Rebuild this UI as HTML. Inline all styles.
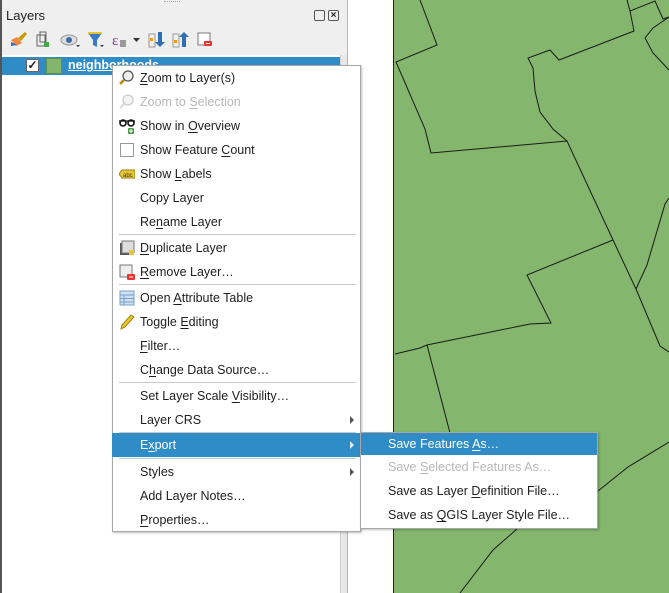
<!DOCTYPE html>
<html><head><meta charset="utf-8"><style>
*{margin:0;padding:0;box-sizing:border-box}
body{width:669px;height:593px;overflow:hidden;position:relative;background:#fff;font-family:"Liberation Sans",sans-serif;font-size:12.5px;color:#1e1e1e}
.abs{position:absolute}
u{text-decoration:underline;text-underline-offset:2px}
.menu{position:absolute;background:#fff;border:1px solid #a8a8a8;box-shadow:1px 1px 2px rgba(0,0,0,.25)}
.it{position:absolute;left:0;right:0;height:24px;line-height:24px;padding-left:27px;white-space:nowrap}
.dis{color:#b8b8b8}
.sep{position:absolute;left:6px;right:4px;height:1px;background:#c8c8c8}
.hl{background:#308cc6;color:#fff}
.arr{position:absolute;right:6px;top:8px;width:0;height:0;border-left:4px solid #555;border-top:4px solid transparent;border-bottom:4px solid transparent}
.ic{position:absolute;left:6px;top:4px;width:16px;height:16px}
</style></head><body>
<div class="abs" style="left:0;top:0;width:348px;height:593px;background:#efefef;border-left:2px solid #555"></div>
<div class="abs" style="left:347px;top:0;width:1px;height:593px;background:#b5b5b5"></div>
<div class="abs" style="left:164px;top:1px;width:16px;height:2px;border-top:1px dotted #aaa"></div>
<div class="abs" style="left:6px;top:8px;font-size:13px">Layers</div>
<div class="abs" style="left:314px;top:10px;width:11px;height:11px;border:1px solid #555;border-radius:2px"></div>
<div class="abs" style="left:328px;top:10px;width:11px;height:11px;border:1px solid #555;border-radius:2px;font-size:10px;line-height:9px;text-align:center;font-weight:bold">×</div>
<svg class="abs" style="left:8px;top:30px" width="210" height="20">
<path d="M3 10 l6 -3 l5 6 l-6 3z" fill="#e84"/><path d="M3 12 l6 3 l-6 1z" fill="#36c"/><path d="M10 8 l7 -6 l2 2 l-6 7z" fill="#c90"/>
<rect x="29" y="5" width="8" height="11" fill="none" stroke="#666"/><rect x="32" y="2" width="6" height="10" fill="none" stroke="#666"/><rect x="36" y="12" width="5" height="5" fill="#4a4"/>
<ellipse cx="61" cy="10" rx="8" ry="5" fill="#ddd" stroke="#999"/><circle cx="61" cy="10" r="3" fill="#3a6ea5"/><path d="M68 15 l4 0 l-2 2z" fill="#333"/>
<path d="M80 3 h14 l-5 7 v7 l-4 -2 v-5z" fill="#3a7cc4"/><rect x="80" y="2" width="14" height="2" fill="#e8c030"/><path d="M92 15 l4 0 l-2 2z" fill="#333"/>
<text x="104" y="15" font-size="15" fill="#7a3a8a" font-family="Liberation Serif">ε</text><rect x="112" y="10" width="6" height="7" fill="#999"/><path d="M125 8 h7 l-3.5 4z" fill="#333"/>
<rect x="141" y="4" width="6" height="13" fill="none" stroke="#999"/><rect x="142" y="8" width="3" height="3" fill="#f90"/><path d="M150 2 v10 h-3 l5 5 l5 -5 h-3 v-10z" fill="#2f6db5"/>
<rect x="165" y="4" width="6" height="13" fill="none" stroke="#999"/><rect x="166" y="10" width="3" height="3" fill="#f90"/><path d="M174 17 v-10 h-3 l5 -5 l5 5 h-3 v10z" fill="#2f6db5"/>
<rect x="190" y="3" width="12" height="12" fill="#fff" stroke="#777"/><rect x="196" y="11" width="8" height="5" rx="1" fill="#e33"/><rect x="198" y="13" width="4" height="1" fill="#fff"/>
</svg>
<div class="abs" style="left:2px;top:55px;width:338px;height:538px;background:#fff"></div>
<div class="abs" style="left:340px;top:55px;width:7px;height:538px;background:#e8e8e8;border-left:1px solid #d0d0d0"></div>
<div class="abs" style="left:2px;top:57px;width:338px;height:18px;background:#308cc6"></div>
<div class="abs" style="left:26px;top:59px;width:13px;height:13px;background:#fff;border:1px solid #666;font-size:12px;line-height:11px;text-align:center;font-weight:bold">✓</div>
<div class="abs" style="left:46px;top:58px;width:16px;height:16px;background:#83b56d;border:1px solid #5f8f4f"></div>
<div class="abs" style="left:68px;top:58px;color:#fff;font-weight:bold;text-decoration:underline">neighborhoods</div>
<div class="abs" style="left:393px;top:0;width:276px;height:593px;background:#84b66d;border-left:1px solid #222"></div>
<svg class="abs" style="left:0;top:0" width="669" height="593" fill="none" stroke="#1a1a1a" stroke-width="1">
<polyline points="420,0 437,45 396,62 425,129 431,153 567,141 613,240 636,289 660,346 669,352"/>
<polyline points="567,141 553,129 540,112 535,91 533,68 528,58 550,50 559,60 634,31 630,11 655,1 663,19 669,17"/>
<polyline points="630,11 627,0"/>
<polyline points="645,38 653,28 669,17"/>
<polyline points="645,38 653,53 669,70"/>
<polyline points="613,240 527,275 551,323 530,324 427,345 420,348 395,354"/>
<polyline points="427,345 450,433"/>
<polyline points="636,289 647,265 665,204 669,198"/>
<polyline points="669,442 628,467 598,491"/>
<polyline points="517,529 493,550 460,593"/>
</svg>
<div class="menu" style="left:112px;top:65px;width:249px;height:467px">
<div class="it" style="top:0"><svg class="ic" viewBox="0 0 16 16"><circle cx="9" cy="6" r="5" fill="#eee" stroke="#555" stroke-width="1.3"/><path d="M5 10 l-4 4" stroke="#b8860b" stroke-width="2.5"/></svg><u>Z</u>oom to Layer(s)</div>
<div class="it dis" style="top:24px"><svg class="ic" viewBox="0 0 16 16"><circle cx="9" cy="6" r="5" fill="#f4f4f4" stroke="#ccc" stroke-width="1.3"/><path d="M5 10 l-4 4" stroke="#ddd" stroke-width="2.5"/></svg>Zoom to <u>S</u>election</div>
<div class="it" style="top:48px"><svg class="ic" viewBox="0 0 16 16"><circle cx="4" cy="5" r="3" fill="none" stroke="#111" stroke-width="1.6"/><circle cx="12" cy="5" r="3" fill="none" stroke="#111" stroke-width="1.6"/><path d="M0 3 h16" stroke="#111" stroke-width="1.3"/><rect x="9" y="10" width="6" height="6" rx="1" fill="#4a9a4a"/><path d="M12 11 v4 M10 13 h4" stroke="#fff"/></svg>Show in <u>O</u>verview</div>
<div class="it" style="top:72px"><span class="ic" style="left:7px;top:5px;width:14px;height:14px;border:1px solid #999;background:#fff"></span>Show Feature <u>C</u>ount</div>
<div class="it" style="top:96px"><svg class="ic" viewBox="0 0 16 16"><path d="M0 8 l3 -4 h13 v8 h-13z" fill="#e8c830" stroke="#9a8010"/><text x="4" y="11" font-size="6" fill="#333">abc</text></svg>Show <u>L</u>abels</div>
<div class="it" style="top:120px">Copy Layer</div>
<div class="it" style="top:144px">Re<u>n</u>ame Layer</div>
<div class="sep" style="top:168px"></div>
<div class="it" style="top:170px"><svg class="ic" viewBox="0 0 16 16"><rect x="1" y="3" width="11" height="12" fill="#555"/><rect x="3" y="1" width="12" height="12" fill="#ddd" stroke="#777"/><rect x="10" y="10" width="5" height="5" fill="#e8c830"/></svg><u>D</u>uplicate Layer</div>
<div class="it" style="top:194px"><svg class="ic" viewBox="0 0 16 16"><rect x="1" y="1" width="12" height="12" fill="#eee" stroke="#777"/><rect x="8" y="10" width="8" height="6" rx="1" fill="#e33"/><path d="M10 13 h4" stroke="#fff"/></svg><u>R</u>emove Layer…</div>
<div class="sep" style="top:218px"></div>
<div class="it" style="top:220px"><svg class="ic" viewBox="0 0 16 16"><rect x="1" y="1" width="14" height="14" fill="#cfe0f2" stroke="#7aa0c8"/><path d="M1 5 h14 M1 8.5 h14 M1 12 h14 M5 5 v10" stroke="#7aa0c8"/></svg>Open <u>A</u>ttribute Table</div>
<div class="it" style="top:244px"><svg class="ic" viewBox="0 0 16 16"><path d="M2 15 l1 -4 l9 -10 l3 2 l-9 10z" fill="#e8c830" stroke="#9a8010"/></svg>Toggle <u>E</u>diting</div>
<div class="it" style="top:268px"><u>F</u>ilter…</div>
<div class="it" style="top:292px">C<u>h</u>ange Data Source…</div>
<div class="sep" style="top:316px"></div>
<div class="it" style="top:318px">Set Layer Scale <u>V</u>isibility…</div>
<div class="it" style="top:342px">Layer CRS<span class="arr"></span></div>
<div class="sep" style="top:366px"></div>
<div class="it hl" style="top:367px;left:-1px;right:-1px;padding-left:28px">E<u>x</u>port<span class="arr" style="border-left-color:#dce9f5;right:7px"></span></div>
<div class="sep" style="top:392px"></div>
<div class="it" style="top:394px">Styles<span class="arr"></span></div>
<div class="it" style="top:418px">Add Layer Notes…</div>
<div class="it" style="top:442px"><u>P</u>roperties…</div>
</div>
<div class="menu" style="left:360px;top:432px;width:238px;height:97px">
<div class="it hl" style="top:0;height:22px;line-height:22px">Save Features <u>A</u>s…</div>
<div class="it dis" style="top:22px">Save <u>S</u>elected Features As…</div>
<div class="it" style="top:46px">Save as Layer <u>D</u>efinition File…</div>
<div class="it" style="top:70px">Save as <u>Q</u>GIS Layer Style File…</div>
</div>
</body></html>
